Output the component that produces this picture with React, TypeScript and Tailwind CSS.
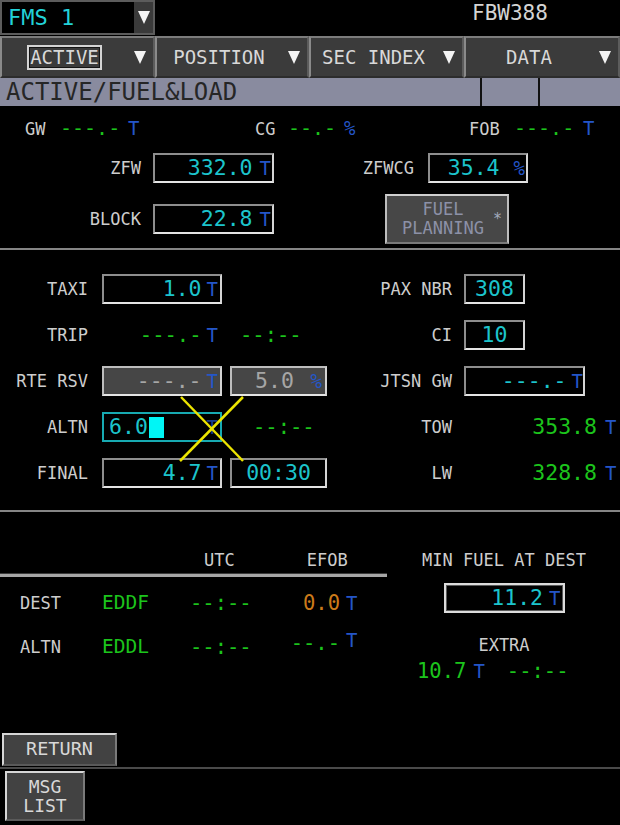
import React from "react";

const LBL = "text-[17px] text-[#cdcdcd] leading-none";
const VAL = "text-[21.5px] leading-none";
const UNIT = "text-[19px] leading-none text-[#2456c8]";
const CY = "text-[#1cc4cc]";
const GR = "text-[#1cc41c]";
const DSH = "text-[20.5px] leading-none text-[#1cc41c]";

function Tri() {
  return (
    <svg width="12" height="13" viewBox="0 0 12 13">
      <polygon points="0,0 12,0 6,13" fill="#f4f4f4" />
    </svg>
  );
}

function Box({ className = "", children }: { className?: string; children?: React.ReactNode }) {
  return (
    <div
      className={`h-[30px] flex items-center border-2 border-t-[#8e8e8e] border-l-[#8e8e8e] border-r-[#d4d4d4] border-b-[#e4e4e4] ${className}`}
    >
      {children}
    </div>
  );
}

function Tab({ w, label, active }: { w: string; label: string; active?: boolean }) {
  return (
    <div
      className={`${w} flex items-center bg-[#3b3b3b] border-2 border-t-[#7c7c7c] border-l-[#8a8a8a] border-r-[#5c5c5c] border-b-[#2c2c2c]`}
    >
      <div className="flex-1 flex justify-center text-[19px] text-[#d8d8d8] leading-none">
        {active ? (
          <span className="border-2 border-[#d4d4d4] shadow-[inset_0_0_0_1px_#151515] px-[1px] py-[1px] leading-[19px]">
            {label}
          </span>
        ) : (
          <span>{label}</span>
        )}
      </div>
      <div className="w-[26px] flex justify-center">
        <Tri />
      </div>
    </div>
  );
}

export default function App() {
  return (
    <div className="w-[620px] h-[825px] bg-black overflow-hidden flex flex-col font-['DejaVu_Sans_Mono',monospace] text-[#cdcdcd]">
      {/* header */}
      <div className="h-[36px] flex shrink-0">
        <div className="w-[155px] h-[35px] flex border-2 border-[#5c5c5c]">
          <div className="flex-1 flex items-center pl-[6px] text-[22px] leading-none text-[#22d2d8]">FMS 1</div>
          <div className="w-[19px] bg-[#3a3a3a] flex items-center justify-center">
            <Tri />
          </div>
        </div>
        <div className="flex-1 pl-[317px] pt-[3px] text-[21px] leading-[20px] text-[#d4d4d4]">FBW388</div>
      </div>

      {/* tabs */}
      <div className="h-[42px] flex shrink-0">
        <Tab w="w-[155px]" label="ACTIVE" active />
        <Tab w="w-[154px]" label="POSITION" />
        <Tab w="w-[155px]" label="SEC INDEX" />
        <Tab w="w-[156px]" label="DATA" />
      </div>

      {/* title bar */}
      <div className="h-[28px] flex bg-[#898b9f] shrink-0">
        <div className="w-[480px] pl-[6px] text-[24px] leading-[28px] text-[#262626]">{"ACTIVE/FUEL&LOAD"}</div>
        <div className="w-[2px] bg-[#111]" />
        <div className="w-[56px]" />
        <div className="w-[2px] bg-[#111]" />
        <div className="flex-1" />
      </div>

      {/* section 1 */}
      <div className="h-[142px] shrink-0 flex flex-col pt-[12px]">
        <div className="h-[24px] flex items-baseline">
          <div className="w-[25px]" />
          <span className={`w-[35px] ${LBL}`}>GW</span>
          <span className="w-[68px] text-[20px] leading-none text-[#1cc41c]">---.-</span>
          <span className={`w-[127px] ${UNIT}`}>T</span>
          <span className={`w-[33px] ${LBL}`}>CG</span>
          <span className="w-[56px] text-[20px] leading-none text-[#1cc41c]">--.-</span>
          <span className={`w-[125px] ${UNIT}`}>%</span>
          <span className={`w-[45px] ${LBL}`}>FOB</span>
          <span className="w-[69px] text-[20px] leading-none text-[#1cc41c]">---.-</span>
          <span className={UNIT}>T</span>
        </div>

        <div className="h-[30px] mt-[11px] flex items-center">
          <span className={`w-[141px] text-right ${LBL}`}>ZFW</span>
          <Box className="ml-[12px] w-[121px] justify-end pr-[1px]">
            <div className="flex items-baseline">
              <span className={`${VAL} ${CY}`}>332.0</span>
              <span className={`ml-[7px] ${UNIT}`}>T</span>
            </div>
          </Box>
          <span className={`w-[140px] text-right ${LBL}`}>ZFWCG</span>
          <Box className="ml-[14px] w-[100px] justify-end pr-[1px]">
            <div className="flex items-baseline">
              <span className={`${VAL} ${CY}`}>35.4</span>
              <span className={`ml-[14px] ${UNIT}`}>%</span>
            </div>
          </Box>
        </div>

        <div className="h-[50px] mt-[11px] flex items-center">
          <span className={`w-[141px] text-right ${LBL}`}>BLOCK</span>
          <Box className="ml-[12px] w-[121px] justify-end pr-[1px]">
            <div className="flex items-baseline">
              <span className={`${VAL} ${CY}`}>22.8</span>
              <span className={`ml-[7px] ${UNIT}`}>T</span>
            </div>
          </Box>
          <div className="ml-[111px] w-[124px] h-[50px] flex items-center bg-[#474747] border-2 border-t-[#cfcfcf] border-l-[#bdbdbd] border-r-[#bdbdbd] border-b-[#7a7a7a]">
            <div className="flex-1 flex flex-col items-center pl-[6px] text-[17px] leading-[19px] text-[#8c91a7]">
              <span>FUEL</span>
              <span>PLANNING</span>
            </div>
            <span className="w-[14px] text-[15px] leading-none text-[#a3abbd]">*</span>
          </div>
        </div>
      </div>

      <div className="h-[2px] shrink-0 bg-[#858585]" />

      {/* section 2 */}
      <div className="relative h-[260px] shrink-0 flex flex-col pt-[24px] gap-[16px]">
        {/* TAXI */}
        <div className="h-[30px] flex items-center">
          <div className="w-[340px] flex items-center">
            <span className={`w-[88px] text-right ${LBL}`}>TAXI</span>
            <Box className="ml-[14px] w-[120px] justify-end pr-[2px]">
              <div className="flex items-baseline">
                <span className={`${VAL} ${CY}`}>1.0</span>
                <span className={`ml-[5px] ${UNIT}`}>T</span>
              </div>
            </Box>
          </div>
          <span className={`w-[112px] text-right ${LBL}`}>PAX NBR</span>
          <Box className="ml-[12px] w-[61px] justify-center">
            <span className={`${VAL} ${CY}`}>308</span>
          </Box>
        </div>

        {/* TRIP */}
        <div className="h-[30px] flex items-center">
          <div className="w-[340px] flex items-center">
            <span className={`w-[88px] text-right ${LBL}`}>TRIP</span>
            <div className="ml-[14px] w-[120px] h-[30px] flex items-center justify-end pr-[4px]">
              <div className="flex items-baseline">
                <span className={DSH}>---.-</span>
                <span className={`ml-[5px] ${UNIT}`}>T</span>
              </div>
            </div>
            <span className={`ml-[18px] ${DSH}`}>--:--</span>
          </div>
          <span className={`w-[112px] text-right ${LBL}`}>CI</span>
          <Box className="ml-[12px] w-[61px] justify-center">
            <span className={`${VAL} ${CY}`}>10</span>
          </Box>
        </div>

        {/* RTE RSV */}
        <div className="h-[30px] flex items-center">
          <div className="w-[340px] flex items-center">
            <span className={`w-[88px] text-right ${LBL}`}>RTE RSV</span>
            <Box className="ml-[14px] w-[120px] justify-end pr-[2px] bg-[#464646] border-t-[#bdbdbd] border-l-[#bdbdbd]">
              <div className="flex items-baseline">
                <span className={`${VAL} text-[#a6a6a6]`}>---.-</span>
                <span className={`ml-[5px] ${UNIT}`}>T</span>
              </div>
            </Box>
            <Box className="ml-[8px] w-[97px] justify-between pl-[23px] pr-[3px] bg-[#464646] border-t-[#bdbdbd] border-l-[#bdbdbd]">
              <span className={`${VAL} text-[#a6a6a6]`}>5.0</span>
              <span className={UNIT}>%</span>
            </Box>
          </div>
          <span className={`w-[112px] text-right ${LBL}`}>JTSN GW</span>
          <Box className="ml-[12px] w-[121px] justify-end pr-[0px]">
            <div className="flex items-baseline">
              <span className={`${VAL} ${CY}`}>---.-</span>
              <span className={`ml-[5px] ${UNIT}`}>T</span>
            </div>
          </Box>
        </div>

        {/* ALTN */}
        <div className="h-[30px] flex items-center">
          <div className="w-[340px] flex items-center">
            <span className={`w-[88px] text-right ${LBL}`}>ALTN</span>
            <div className="ml-[14px] w-[120px] h-[30px] flex items-center border-2 border-[#17aab2] pl-[5px] pr-[2px]">
              <span className={`${VAL} ${CY}`}>6.0</span>
              <span className="ml-[1px] w-[15px] h-[21px] bg-[#00f6f6]" />
              <span className="flex-1" />
              <span className={`${UNIT} opacity-70`}>T</span>
            </div>
            <span className={`ml-[31px] ${DSH}`}>--:--</span>
          </div>
          <span className={`w-[112px] text-right ${LBL}`}>TOW</span>
          <div className="flex items-baseline">
            <span className={`w-[145px] text-right ${VAL} ${GR}`}>353.8</span>
            <span className={`ml-[8px] ${UNIT}`}>T</span>
          </div>
        </div>

        {/* FINAL */}
        <div className="h-[30px] flex items-center">
          <div className="w-[340px] flex items-center">
            <span className={`w-[88px] text-right ${LBL}`}>FINAL</span>
            <Box className="ml-[14px] w-[120px] justify-end pr-[2px]">
              <div className="flex items-baseline">
                <span className={`${VAL} ${CY}`}>4.7</span>
                <span className={`ml-[5px] ${UNIT}`}>T</span>
              </div>
            </Box>
            <Box className="ml-[8px] w-[97px] justify-center">
              <span className={`${VAL} ${CY}`}>00:30</span>
            </Box>
          </div>
          <span className={`w-[112px] text-right ${LBL}`}>LW</span>
          <div className="flex items-baseline">
            <span className={`w-[145px] text-right ${VAL} ${GR}`}>328.8</span>
            <span className={`ml-[8px] ${UNIT}`}>T</span>
          </div>
        </div>

        {/* yellow cross over ALTN */}
        <svg className="absolute left-[178px] top-[145px]" width="68" height="68" viewBox="0 0 68 68">
          <line x1="3" y1="2" x2="65" y2="66" stroke="#ece400" strokeWidth="2.5" />
          <line x1="65" y1="2" x2="2" y2="66" stroke="#ece400" strokeWidth="2.5" />
        </svg>
      </div>

      <div className="h-[2px] shrink-0 bg-[#858585]" />

      {/* section 3 */}
      <div className="h-[221px] shrink-0 flex pt-[36px]">
        <div className="w-[388px] flex flex-col">
          <div className="h-[24px] flex items-center">
            <span className={`ml-[204px] ${LBL}`}>UTC</span>
            <span className={`ml-[72px] ${LBL}`}>EFOB</span>
          </div>
          <div className="mt-[1px] w-[387px] h-[4px] border-t border-[#3a3a3a] bg-[#a6a6a6]" />
          <div className="mt-[11px] h-[30px] flex items-center">
            <span className={`w-[102px] pl-[20px] ${LBL}`}>DEST</span>
            <span className={`w-[88px] text-[19.5px] leading-none ${GR}`}>EDDF</span>
            <span className={`w-[90px] ${DSH}`}>--:--</span>
            <div className="flex items-baseline">
              <span className="w-[60px] text-right text-[20.5px] leading-none text-[#cc7a1a]">0.0</span>
              <span className={`ml-[6px] ${UNIT}`}>T</span>
            </div>
          </div>
          <div className="mt-[14px] h-[30px] flex items-center">
            <span className={`w-[102px] pl-[20px] ${LBL}`}>ALTN</span>
            <span className={`w-[88px] text-[19.5px] leading-none ${GR}`}>EDDL</span>
            <span className={`w-[90px] ${DSH}`}>--:--</span>
            <div className="flex items-start mb-[10px]">
              <span className={`w-[60px] text-right mt-[2px] ${DSH}`}>--.-</span>
              <span className={`ml-[6px] ${UNIT}`}>T</span>
            </div>
          </div>
        </div>
        <div className="flex-1 flex flex-col">
          <div className="h-[24px] flex items-center justify-center">
            <span className={LBL}>MIN FUEL AT DEST</span>
          </div>
          <div className="mt-[11px] mx-auto w-[121px] h-[30px] flex items-center justify-end pr-[2px] border-2 border-[#dcdcdc] shadow-[inset_0_0_0_1px_#5a5a5a]">
            <div className="flex items-baseline">
              <span className={`${VAL} ${CY}`}>11.2</span>
              <span className={`ml-[6px] ${UNIT}`}>T</span>
            </div>
          </div>
          <div className="mt-[20px] h-[24px] flex items-center justify-center">
            <span className={LBL}>EXTRA</span>
          </div>
          <div className="mt-[4px] h-[24px] flex items-baseline pl-[29px]">
            <span className={`text-[20.5px] leading-none ${GR}`}>10.7</span>
            <span className={`ml-[7px] ${UNIT}`}>T</span>
            <span className={`ml-[22px] ${DSH}`}>--:--</span>
          </div>
        </div>
      </div>

      {/* return */}
      <div className="h-[34px] shrink-0 pl-[2px]">
        <div className="w-[115px] h-[33px] flex items-center justify-center bg-[#424242] border-2 border-t-[#d6d6d6] border-l-[#d6d6d6] border-r-[#7a7a7a] border-b-[#5a5a5a] text-[18.5px] leading-none text-[#d8d8d8]">
          RETURN
        </div>
      </div>
      <div className="h-[2px] shrink-0 bg-[#4a4a4a]" />
      <div className="flex-1 pl-[5px] pt-[2px]">
        <div className="w-[80px] h-[50px] flex flex-col items-center justify-center bg-[#424242] border-2 border-t-[#d6d6d6] border-l-[#d6d6d6] border-r-[#7a7a7a] border-b-[#5a5a5a] text-[18px] leading-[19px] text-[#d8d8d8]">
          <span>MSG</span>
          <span>LIST</span>
        </div>
      </div>
    </div>
  );
}
